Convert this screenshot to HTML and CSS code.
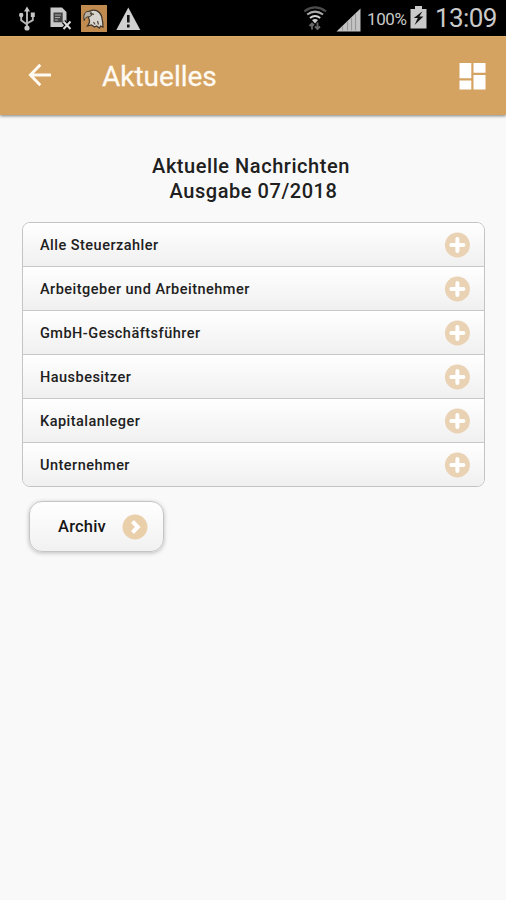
FILE: index.html
```html
<!DOCTYPE html>
<html lang="de">
<head>
<meta charset="utf-8">
<title>Aktuelles</title>
<link rel="stylesheet" href="styles.css">
</head>
<body>
<svg class="defs" aria-hidden="true">
  <symbol id="plus" viewBox="0 0 26 26"><circle cx="13.400" cy="13" r="12.500" fill="#ead3b4"/><path d="M13.400 7v12M7.400 13h12" stroke="#fff" stroke-width="4" stroke-linecap="round"/></symbol>
</svg>
<div class="status">
  <div class="status-left">
    <svg class="usb" width="18" height="26" viewBox="0 0 18 26"><g fill="none" stroke="#b8b8b8" stroke-width="1.9"><path d="M9 4v17M3.2 10v4.2L9 18.5M14.8 9v5.2L9 17.5"/></g><g fill="#c6c6c6"><path d="M9 .5l3 5H6zM12.8 6.5h4V11h-4z"/><circle cx="3.2" cy="9" r="2.2"/><circle cx="9" cy="22" r="2.6"/></g></svg>
    <svg class="doc" width="22" height="24" viewBox="0 0 22 24"><path d="M.5.5H12l4.5 4.5v15H.5z" fill="#c9c9c9"/><path d="M3.5 5.5h9.2v9.8H3.5z" fill="#444"/><path d="M5 8h6M5 10.5h5M5 13h3" stroke="#aaa"/><path d="M13.5 14.5l7 7.5M20.5 14.5l-7 7.5" stroke="#000" stroke-width="4.4"/><path d="M13.5 14.5l7 7.5M20.5 14.5l-7 7.5" stroke="#ddd" stroke-width="2"/></svg>
    <svg class="eagle" width="26" height="27" viewBox="0 0 26 27"><path fill="#c18a4e" d="M0 0h26v27H0z"/><path d="M8.5 6.3c5-2.8 10-.6 12 4.7 1 4 1.5 7 1.5 11l-2.5-1-1 2-3-2-2 1-3-2-4 1c2.500-3 3-5 1-8z" fill="#d8d5ce" stroke="#3d352b" stroke-width="1.2"/><path d="M3.2 15.500C1.800 10 4 6 8.500 6.300c2 .6 2.500 2.200 2.200 4L8 12c-2-.6-4 .5-4.800 3.500z" fill="#b8b0a3" stroke="#3d352b"/><path d="M9 8.600l4 .8M12.500 17l1.500 2.500M16.500 16l1 3.500" stroke="#4c4338" stroke-width="1.200" fill="none"/></svg>
    <svg class="warn" width="25" height="24" viewBox="0 0 25 24"><path d="M12.3.5L24.3 23H.3z" fill="#d0d0d0"/><path d="M12.3 8v7.5M12.3 17.5v3" stroke="#111" stroke-width="2.600"/></svg>
  </div>
  <div class="status-right">
    <svg class="wifi" width="25" height="25" viewBox="0 0 25 25"><g fill="none" stroke-width="2.1"><path d="M1.3 5.3Q12 -2.5 23 5.3" stroke="#4c4c4c"/><path d="M4.2 8.5Q12 2.700 20 8.500" stroke="#aaa"/><path d="M7 12Q12 8 17.2 12" stroke="#d5d5d5"/></g><path d="M9 14q3-2 6 0l-3 3.500z" fill="#ccc"/><path d="M9 23.500v-6M6.500 20l2.500-2.500 2 2M14.500 16.500v6.500M12 20.500l2.500 2.500 2.500-2.500" fill="none" stroke="#686868" stroke-width="1.8"/></svg>
    <svg class="signal" width="25" height="24" viewBox="0 0 25 24"><path d="M24.5.5V23.5H.5z" fill="#c4c4c4"/><path d="M6.500 18.500v4M11.500 13.500v9M15.500 10v12.500M19.500 6v16.500" stroke="#999" stroke-width="1.200"/></svg>
    <span class="percent">100%</span>
    <svg class="battery" width="17" height="23" viewBox="0 0 17 23"><path d="M5 0h7v3h4.500v19.500H.5V3H5z" fill="#c9c9c9"/><path d="M12.500 5.200L3.800 12h4l-3.200 7 8.800-8.500h-4z" fill="#111"/></svg>
    <span class="clock">13:09</span>
  </div>
</div>
<header class="bar">
  <svg class="back" width="24" height="24" viewBox="0 0 24 24"><path d="M12.300 1.800L2.400 12l9.900 10.200M3 12h20" fill="none" stroke="#fffaf2" stroke-width="2.900"/></svg>
  <h1 class="title">Aktuelles</h1>
  <svg class="grid" width="27" height="27" viewBox="0 0 27 27"><path fill="#fff" d="M.5 0h11.800v15.200H.5zM14.500 0h12v9.700h-12zM.5 17.400h11.800v9.100H.5zM14.500 11.900h12v14.600h-12z"/></svg>
</header>
<main>
  <h2 class="heading">Aktuelle Nachrichten<br><span class="issue">Ausgabe 07/2018</span></h2>
  <ul class="list">
    <li><span>Alle Steuerzahler</span><svg><use href="#plus"/></svg></li>
    <li><span>Arbeitgeber und Arbeitnehmer</span><svg><use href="#plus"/></svg></li>
    <li><span>GmbH-Geschäftsführer</span><svg><use href="#plus"/></svg></li>
    <li><span>Hausbesitzer</span><svg><use href="#plus"/></svg></li>
    <li><span>Kapitalanleger</span><svg><use href="#plus"/></svg></li>
    <li><span>Unternehmer</span><svg><use href="#plus"/></svg></li>
  </ul>
  <button class="archive"><span>Archiv</span><svg width="26" height="26" viewBox="0 0 26 26"><circle cx="13" cy="13" r="12.500" fill="#ead0aa"/><path d="M10.500 7.500l5.300 5.500-5.300 5.500" fill="none" stroke="#fff" stroke-width="4"/></svg></button>
</main>
</body>
</html>
```

FILE: styles.css
```css
* { box-sizing: border-box; }
body { margin: 0; min-height: 900px; background: #f9f9f9; font-family: Roboto, "Liberation Sans", sans-serif; color: #202020; }
svg { display: block; flex: none; }
.defs { display: none; }
.status { height: 36px; background: #000; display: flex; justify-content: space-between; color: #c9c9c9; }
.status-left, .status-right { display: flex; align-items: flex-start; }
.status-left { padding-left: 18px; }
.usb { margin-top: 6px; }
.doc { margin: 7px 0 0 14px; }
.eagle { margin: 5px 0 0 9px; }
.warn { margin: 7px 0 0 9px; }
.status-right { padding-right: 9px; }
.wifi { margin-top: 6px; }
.signal { margin: 8px 6px 0 8px; }
.percent { width: 40px; margin-top: 8px; font-size: 17px; line-height: 22px; letter-spacing: -0.4px; white-space: nowrap; }
.battery { margin: 6px 8px 0 3px; }
.clock { width: 62px; font-size: 26px; line-height: 36px; letter-spacing: -0.6px; white-space: nowrap; }
.bar { height: 79px; display: flex; align-items: center; padding: 0 20px 0 28px; background: #d4a261; border-top: 1px solid #d7ae6b; box-shadow: 0 1px 3px rgba(0,0,0,.5); }
.back { margin-bottom: 2px; }
.title { flex: 1; margin: 0 0 0 50px; padding-top: 2px; font-size: 28px; line-height: 36px; font-weight: 400; color: #fffaf2; -webkit-text-stroke: .3px #fffaf2; }
main { padding: 39px 21px 0 22px; }
.heading { margin: 0; font-size: 20px; line-height: 25px; font-weight: 500; text-align: center; padding-right: 5px; letter-spacing: .55px; }
.issue { padding-left: 5px; }
.list { list-style: none; margin: 18px 0 0; padding: 0; border: 1px solid #c4c4c4; border-radius: 8px; overflow: hidden; }
.list li { height: 44px; display: flex; align-items: center; justify-content: space-between; padding: 2px 14px 0 17px; font-size: 14.5px; font-weight: 500; letter-spacing: .48px; background: linear-gradient(#fff, #f0f0f0); border-bottom: 1px solid #c8c8c8; }
.list li:last-child { border-bottom: 0; height: 43px; }
.list svg { width: 26px; height: 26px; margin-bottom: 1px; }
.archive { margin: 14px 0 0 7px; width: 135px; height: 51px; display: flex; align-items: center; justify-content: space-between; padding: 1px 15px 0 28px; border: 1px solid #c5c5c5; border-radius: 13px; background: linear-gradient(#fff, #f1f1f1); box-shadow: 0 1px 4px rgba(0,0,0,.25); font: 500 16.5px Roboto, sans-serif; letter-spacing: .2px; color: #161616; }
.archive span { margin-bottom: 2px; }
```
